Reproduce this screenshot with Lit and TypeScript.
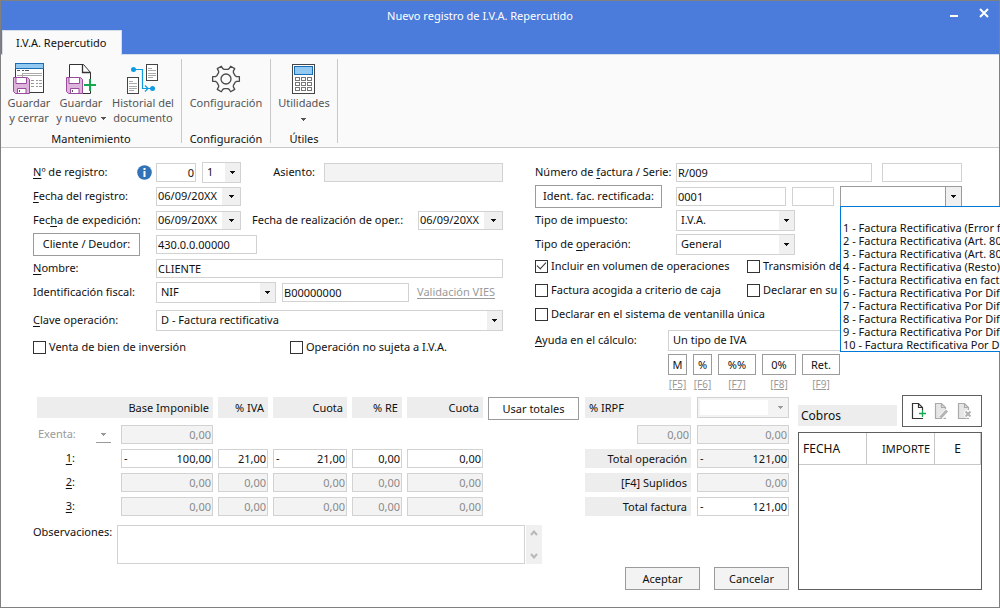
import { LitElement, html, css, svg, nothing } from "lit";
import { customElement } from "lit/decorators.js";

const REASONS = [
  "",
  "1 - Factura Rectificativa (Error fundado en derecho)",
  "2 - Factura Rectificativa (Art. 80.3)",
  "3 - Factura Rectificativa (Art. 80.4)",
  "4 - Factura Rectificativa (Resto)",
  "5 - Factura Rectificativa en facturas simplificadas",
  "6 - Factura Rectificativa Por Diferencias",
  "7 - Factura Rectificativa Por Diferencias",
  "8 - Factura Rectificativa Por Diferencias",
  "9 - Factura Rectificativa Por Diferencias",
  "10 - Factura Rectificativa Por Diferencias",
];

const KEYS = [
  { text: "M", key: "[F5]", cls: "k1" },
  { text: "%", key: "[F6]", cls: "k1" },
  { text: "%%", key: "[F7]", cls: "k2" },
  { text: "0%", key: "[F8]", cls: "k3" },
  { text: "Ret.", key: "[F9]", cls: "k2" },
];

const LINES = [
  { n: "1", off: false, values: ["100,00", "21,00", "21,00", "0,00", "0,00"], minus: [0, 2] },
  { n: "2", off: true, values: ["0,00", "0,00", "0,00", "0,00", "0,00"], minus: [] as number[] },
  { n: "3", off: true, values: ["0,00", "0,00", "0,00", "0,00", "0,00"], minus: [] as number[] },
];
const LINE_FIELDS = ["Base Imponible", "% IVA", "Cuota", "% RE", "Cuota RE"];

const arrow = html`<svg class="arrow" width="5" height="3" viewBox="0 0 5 3" aria-hidden="true"><path d="M0 0h5v1h-1v1h-1v1h-1v-1h-1v-1h-1z" fill="currentColor" shape-rendering="crispEdges"/></svg>`;

const floppy = svg`
  <path d="M.5 15.5h14l2 2v14H2.5l-2-2z" fill="#dcb4dc" stroke="#9a4a9f"/>
  <path d="M3 15.5h10.500v6H3z" fill="#fff" stroke="#9a4a9f"/>
  <path d="M4.500 31.500v-5h8.500v5z" fill="#fff" stroke="#9a4a9f"/>
  <path d="M6 28h1v2H6z" fill="#555"/>`;

const saveCloseIcon = html`<svg width="32" height="32" viewBox="0 0 32 32" aria-hidden="true">
  <g shape-rendering="crispEdges" fill="none">
    <path d="M2.500 6v24.500h28V6" fill="#fff" stroke="#3a3a3a"/>
    <path d="M2.500 1.500h28v5h-28z" fill="#92c9f0" stroke="#1a6cb4"/>
    <path d="M4 13.500h25M9.500 11v4M9 11.500h20" stroke="#aaa"/>
    <path d="M4 8.500h3m2 0h2m1 0h4" stroke="#555"/>
    <path d="M18 18.500h3m2 0h2m1 0h3M18 21.500h3m2 0h2m1 0h3M18 24.500h3m2 0h2m1 0h3" stroke="#999"/>
  </g>${floppy}</svg>`;

const saveNewIcon = html`<svg width="32" height="32" viewBox="0 0 32 32" aria-hidden="true">
  <path d="M4.500 31V2.500h14l7 8V31.500h-8" fill="#fff" stroke="#333"/>
  <path d="M17.500 2.500v8h8" fill="none" stroke="#333" stroke-width="1.300"/>
  <path d="M25 17v12M19 23h12" stroke="#fafafa" stroke-width="5"/>
  <path d="M25 17v12M19 23h12" stroke="#17a650" stroke-width="2"/>
  <g transform="translate(1 0)">${floppy}</g></svg>`;

const historyIcon = html`<svg width="32" height="32" viewBox="0 0 32 32" aria-hidden="true">
  <g fill="#fff" stroke="#444" shape-rendering="crispEdges">
    <path d="M19.500 2.500h11v16h-11zM.5 15.500h11v16h-11z"/>
    <path d="M21 6.500h4M21 8.500h8M21 11.500h8M21 13.500h8M21 15.500h5M2 19.500h4M2 21.500h8M2 24.500h8M2 26.500h8M2 28.500h5" stroke="#aaa"/>
  </g>
  <path d="M7 7.500h8.500v19H25M18 23.500l3 3-3 3" fill="none" stroke="#0f9be3" stroke-width="1.200"/>
  <circle cx="6.500" cy="7.500" r="2.500" fill="#0f9be3"/><circle cx="25.500" cy="26.500" r="2.500" fill="#0f9be3"/></svg>`;

const gearOutline = (cx: number, cy: number) => {
  const at = (deg: number, r: number) => {
    const a = (deg * Math.PI) / 180;
    return `${(cx + r * Math.cos(a)).toFixed(2)} ${(cy + r * Math.sin(a)).toFixed(2)}`;
  };
  const teeth = [0, 60, 120, 180, 240, 300].map(
    (t) => `${at(t - 19, 9.8)} L${at(t - 13, 10.8)} L${at(t - 10, 13.6)} L${at(t + 10, 13.6)} L${at(t + 13, 10.8)} L${at(t + 19, 9.8)}`,
  );
  return `M${teeth.join(" L")}Z`;
};

const gearIcon = html`<svg width="32" height="32" viewBox="0 0 32 32" aria-hidden="true">
  <g fill="none" stroke="#4a4a4a" stroke-width="1.300" stroke-linejoin="round">
    <path d=${gearOutline(16, 17)} /><circle cx="16" cy="17" r="5"/>
  </g></svg>`;

const calcIcon = html`<svg width="32" height="32" viewBox="0 0 32 32" aria-hidden="true">
  <g shape-rendering="crispEdges" fill="#fff" stroke="#444">
    <path d="M4.500 2.500h22v29h-22z"/>
    <path d="M6.500 4.500h18v8h-18z" fill="#92c9f0" stroke="#1a6cb4"/>
    ${[15, 20, 25].map((y) => [7, 13, 19].map((x) => svg`<rect x=${x + 0.5} y=${y + 0.5} width="4" height="3" stroke="#777"/>`))}
  </g></svg>`;

const docIcon = (stroke: string, fill: string, extra: unknown) => html`<svg width="16" height="18" viewBox="0 0 16 18" aria-hidden="true">
  <path d="M11.500 5.500V16.500H1.500V1.500h6z" fill=${fill}/>
  <path d="M12 16.500H1.500V1.500h6l4 4V8M7.500 1.500v4h4" fill="none" stroke=${stroke} stroke-width="1.200"/>${extra}</svg>`;

const addIcon = docIcon("#333", "#fff", svg`<path d="M8 11.500h7M11.500 8v7" stroke="#fff" stroke-width="4"/><path d="M8 11.500h7M11.500 8v7" stroke="#17a650" stroke-width="1.300"/>`);
const editIcon = docIcon("#aaa", "#e6e6e6", svg`<path d="M7 15.500l6.500-7" stroke="#fff" stroke-width="5"/><path d="M6.500 15.500l6.500-7" stroke="#b4b4b4" stroke-width="3"/>`);
const removeIcon = docIcon("#aaa", "#e6e6e6", svg`<path d="M8 9l6 6M14 9l-6 6" stroke="#fff" stroke-width="4"/><path d="M8.500 9.500l5 5M13.500 9.500l-5 5" stroke="#b0b0b0" stroke-width="2"/>`);

@customElement("app-root")
export class AppRoot extends LitElement {
  static styles = css`
    :host { display: block; min-height: 100vh; overflow: hidden; box-sizing: border-box; position: relative;
      font: 11px/14px "Noto Sans", "Open Sans", sans-serif; color: #111; background: #fff; }
    *, *::before { box-sizing: border-box; }
    button, input, select, textarea { font: inherit; color: inherit; margin: 0; border-radius: 0; }
    u { text-underline-offset: 2px; }
    .window { border: 1px solid #808080; min-height: 100vh; display: flex; flex-direction: column; }

    .title { background: #4b7bdb; color: #fff; height: 29px; display: flex; align-items: center; padding: 0 0 0 20px; }
    .title h1 { flex: 1; margin: 0; font: inherit; text-align: center; }
    .title button { border: 0; background: none; color: #fff; width: 30px; height: 24px; padding: 0; display: grid; place-items: center; }
    .title .wins { display: flex; align-self: flex-start; }
    .tabs { background: #4b7bdb; border-bottom: 1px solid #d5dcea; height: 25px; display: flex; padding-left: 1px; }
    .tab { height: 25px; border: 1px solid #d5dcea; border-bottom: 0; background: #fafafa; padding: 0 14px 0 13px; }

    .ribbon { background: #fafafa; border-bottom: 1px solid #c8c8c8; height: 93px; display: flex; padding: 4px 0; }
    .group { border-right: 1px solid #c8c8c8; display: flex; flex-direction: column; justify-content: space-between; }
    .group h2 { margin: 0; font: inherit; text-align: center; line-height: 9px; }
    .tools { display: flex; justify-content: center; }
    .g1 .tools { justify-content: flex-start; padding-left: 1px; }
    .tool { border: 0; background: none; padding: 3px 0 0; color: #555; line-height: 15px; display: flex; flex-direction: column; align-items: center; gap: 1px; white-space: nowrap; }
    .tool .arrow { margin: 0 0 2px 4px; }
    .tool .arrow.arrow:only-child { margin-left: 0; }
    .tool svg { flex: none; }
    .g1 { width: 181px; }
    .g1 .tool:nth-child(1) { width: 54px; }
    .g1 .tool:nth-child(2) { width: 50px; }
    .g1 .tool:nth-child(3) { width: 74px; }
    .g2 { width: 89px; }
    .g3 { width: 67px; }

    .form { display: grid; grid-template-columns: 470fr 427fr; column-gap: 32px; padding: 12px 37px 0 32px; }
    .row { display: flex; align-items: center; height: 24px; }
    .row.tall { height: 32px; }
    .left .cap { width: 123px; flex: none; }
    .right .cap { width: 141px; flex: none; }
    .btn { border: 1px solid #9b9b9b; background: #fff; padding: 0; height: 23px; text-align: center; }
    .btn.soft { background: #f3f3f3; }
    .capwrap { display: flex; align-items: center; justify-content: space-between; padding-right: 4px; }
    .w-deudor { width: 107px; }
    .w-ident { width: 127px; }

    .field { border: 1px solid #d2d2d2; background: #fff; height: 19px; padding: 0 1px; min-width: 0; width: 100%; display: block; }
    .field:disabled { background: #f3f3f3; color: #8a8a8a; }
    .num { text-align: right; }
    .combo { position: relative; display: flex; border: 1px solid #d2d2d2; height: 21px; background: #fff; flex: none; }
    .combo select { appearance: none; border: 0; background: none; flex: 1; min-width: 0; padding: 0 18px 0 4px; outline: 0; }
    .combo .drop { position: absolute; right: 0; top: 0; bottom: 0; width: 15px; background: #f0f0f0; display: grid; place-items: center; pointer-events: none; }
    .date { display: flex; border: 1px solid #d2d2d2; height: 19px; width: 85px; flex: none; background: #fff; }
    .date input { border: 0; padding: 0 1px; flex: 1; min-width: 0; background: none; outline: 0; }
    .date button { border: 0; padding: 0; width: 18px; background: #f0f0f0; display: grid; place-items: center; }
    .open { border-color: #9b9b9b; }
    .open .drop { border-left: 1px solid #9b9b9b; width: 16px; }
    .list { position: absolute; z-index: 5; top: 100%; left: -1px; width: 300px; margin: 0; padding: 1px 2px 0; list-style: none; background: #fff; border: 1px solid #0078d7; line-height: 13px; white-space: nowrap; }
    .list li { height: 13px; }

    .combo.grow, .grow { flex: 1; min-width: 0; }
    .field.w39 { width: 40px; flex: none; }
    .w38 { width: 39px; }
    .w42 { width: 42px; flex: none; }
    .w80 { width: 80px; flex: none; }
    .w101 { width: 101px; }
    .w119 { width: 119px; }
    .w120 { width: 120px; }
    .w122 { width: 122px; }
    .w127 { width: 127px; flex: none; }
    .w179 { width: 179px; flex: none; }
    .gap6 { gap: 6px; }
    .gap10 { gap: 10px; }
    .push { margin-left: auto; }
    .sub { margin-left: auto; padding-right: 9px; flex: none; }
    .sub2 { padding-left: 11px; flex: none; }
    .link { color: #9a9a9a; text-decoration: underline; text-underline-offset: 2px; padding-left: 8px; white-space: nowrap; }

    .check { display: flex; align-items: center; gap: 3px; height: 20px; white-space: nowrap; }
    .check input { appearance: none; width: 13px; height: 13px; border: 1px solid #333; background: #fff; display: grid; place-items: center; flex: none; }
    .check input:checked::before { content: ""; width: 9px; height: 5px; border: solid #333; border-width: 0 0 1px 1px; transform: rotate(-47deg); margin-bottom: 3px; }
    .checks { display: grid; grid-template-columns: 212px 1fr; grid-auto-rows: 24px; }
    .checks .wide { grid-column: 1 / -1; }
    .pair { display: grid; grid-template-columns: 257px 1fr; height: 22px; align-items: center; }
    .calc { display: flex; align-items: center; height: 24px; }
    .calc .cap2 { width: 133px; flex: none; }
    .keys { display: flex; gap: 6px; padding: 2px 0 0 133px; }
    .key { text-align: center; }
    .key .btn { display: block; width: 100%; height: 21px; }
    .key a { color: #9a9a9a; line-height: 18px; font-size: 10px; }
    .k1 { width: 19px; } .k2 { width: 38px; } .k3 { width: 34px; }

    .lower { display: grid; grid-template-columns: 1fr 184px; column-gap: 9px; padding: 2px 17px 0 32px; }
    .entry { padding-top: 2px; min-width: 0; }
    .amounts { display: flex; gap: 6px; }
    .lines { flex: 1; min-width: 0; display: grid; grid-template-columns: 83px 92fr 50fr 74fr 50fr 76fr 91px; column-gap: 5px; grid-template-rows: 25px repeat(4, 24px); align-items: center; }
    .head { background: #ededed; height: 21px; line-height: 21px; padding: 0 4px; text-align: right; align-self: start; white-space: nowrap; }
    .head.first { grid-column: 1 / 3; margin-left: 4px; }
    .lines .btn { align-self: start; }
    .rowcap { text-align: right; padding-right: 41px; }
    .rowcap.ex { display: flex; justify-content: space-between; padding: 0 5px; color: #9a9a9a; align-items: center; }
    .mini { border: 0; border-bottom: 1px solid #9a9a9a; background: none; width: 15px; height: 18px; padding: 2px 0 0; color: #9a9a9a; }
    .mini svg { display: block; margin: 0 auto; }
    .col1 { grid-column: 1; }
    .signed { display: flex; align-items: center; border: 1px solid #d2d2d2; height: 19px; background: #fff; padding-left: 2px; }
    .signed input { border: 0; background: none; flex: 1; width: 0; min-width: 0; height: 17px; padding: 0 1px; text-align: right; outline: 0; }
    .signed.ro { background: #f3f3f3; }
    .totals { width: 204px; display: grid; grid-template-columns: 106px 92px; column-gap: 6px; grid-template-rows: 25px repeat(4, 24px); align-items: center; }
    .totals .combo { align-self: start; background: #f3f3f3; color: #9a9a9a; padding: 2px; }
    .totals .combo select { background: #fff; margin-right: 18px; padding: 0; width: 0; }
    .totals .combo .drop { background: none; }
    .lab { background: #ededed; height: 19px; line-height: 19px; text-align: right; padding-right: 4px; }
    .irpf { text-align: left; }
    .half { width: 54px; justify-self: end; }

    .obs { display: flex; margin-top: 7px; padding-right: 247px; }
    .obs label { width: 84px; flex: none; }
    .obs textarea { flex: 1; min-width: 0; height: 39px; border: 1px solid #d2d2d2; resize: none; display: block; overflow: hidden; }
    .scroll { width: 16px; margin-left: 1px; background: #f0f0f0; display: flex; flex-direction: column; justify-content: space-between; }
    .scroll button { border: 0; background: none; padding: 0; height: 16px; display: grid; place-items: center; }
    .actions { display: flex; justify-content: flex-end; gap: 14px; margin-top: 3px; }
    .actions .btn { width: 75px; }

    .cobros { display: flex; flex-direction: column; gap: 5px; }
    .cobtop { display: flex; gap: 5px; align-items: flex-end; }
    .cobtop h2 { margin: 0 0 1px; flex: 1; font-size: 12px; font-weight: normal; background: #ededed; height: 21px; line-height: 21px; padding-left: 3px; }
    .bar { border: 1px solid #5f5f5f; width: 80px; height: 32px; display: flex; align-items: center; justify-content: center; gap: 7px; }
    .bar button { border: 0; background: none; padding: 0; height: 18px; width: 16px; }
    .tablebox { flex: 1; border: 1px solid #5f5f5f; }
    table { width: 100%; border-collapse: separate; border-spacing: 0; table-layout: fixed; }
    th { height: 32px; font-size: 12px; font-weight: normal; border-right: 1px solid #c8c8c8; border-bottom: 1px solid #c8c8c8; padding: 0 4px; text-align: left; }
    th.imp { text-align: right; font-size: 11px; }
    th.e { text-align: center; }
    .cf { width: 68px; }
  `;

  private combo(id: string, value: string, cls: string, label = "") {
    return html`<span class="combo ${cls}"><select id=${id} aria-label=${label || nothing}><option>${value}</option></select><span class="drop">${arrow}</span></span>`;
  }

  private date(id: string) {
    return html`<span class="date"><input id=${id} value="06/09/20XX"><button type="button" aria-label="Abrir calendario">${arrow}</button></span>`;
  }

  private amount(value: string, label: string, off: boolean, minus: boolean, ro = false) {
    return minus
      ? html`<span class="signed ${ro ? "ro" : ""}">-<input aria-label=${label} value=${value} ?readonly=${ro}></span>`
      : html`<input class="field num" aria-label=${label} value=${value} ?disabled=${off}>`;
  }

  private check(text: string, cls = "", on = false) {
    return html`<label class="check ${cls}"><input type="checkbox" ?checked=${on}>${text}</label>`;
  }

  private ribbon() {
    return html`<div class="ribbon">
      <section class="group g1"><div class="tools">
        <button class="tool">${saveCloseIcon}<span>Guardar<br>y cerrar</span></button>
        <button class="tool">${saveNewIcon}<span>Guardar<br>y nuevo${arrow}</span></button>
        <button class="tool">${historyIcon}<span>Historial del<br>documento</span></button>
      </div><h2>Mantenimiento</h2></section>
      <section class="group g2"><div class="tools"><button class="tool">${gearIcon}<span>Configuración</span></button></div><h2>Configuración</h2></section>
      <section class="group g3"><div class="tools"><button class="tool">${calcIcon}<span>Utilidades</span><span>${arrow}</span></button></div><h2>Útiles</h2></section>
    </div>`;
  }

  private leftForm() {
    return html`<div class="left">
      <div class="row">
        <span class="cap capwrap"><label for="nreg"><u>N</u>º de registro:</label>
          <svg width="15" height="15" viewBox="0 0 15 15" aria-hidden="true"><circle cx="7.500" cy="7.500" r="7.300" fill="#3273b8"/><path d="M6.500 3h2v2h-2zM6.500 6h2v6h-2z" fill="#fff"/></svg></span>
        <span class="row gap6 grow">
          <input id="nreg" class="field num w39" value="0">
          ${this.combo("serieReg", "1", "w38", "Serie del registro")}
          <label class="sub" for="asiento">Asiento:</label>
        </span>
        <input id="asiento" class="field w179" disabled>
      </div>
      <div class="row"><label class="cap" for="freg"><u>F</u>echa del registro:</label>${this.date("freg")}</div>
      <div class="row"><label class="cap" for="fexp">Fec<u>h</u>a de expedición:</label>${this.date("fexp")}
        <label class="sub2" for="foper">Fecha de realización de oper.:</label><span class="push">${this.date("foper")}</span></div>
      <div class="row"><span class="cap"><button type="button" class="btn w-deudor">Cliente / Deudor:</button></span><input class="field w101" aria-label="Cliente / Deudor" value="430.0.0.00000"></div>
      <div class="row"><label class="cap" for="nombre"><u>N</u>ombre:</label><input id="nombre" class="field grow" value="CLIENTE"></div>
      <div class="row"><label class="cap" for="idf">Identificación fiscal:</label><span class="row gap6">${this.combo("idf", "NIF", "w120")}<input class="field w127" aria-label="Número de identificación" value="B00000000"></span>
        <a class="link" href="#vies">Validación VIES</a></div>
      <div class="row tall"><label class="cap" for="clave"><u>C</u>lave operación:</label>${this.combo("clave", "D - Factura rectificativa", "grow")}</div>
      <div class="pair">${this.check("Venta de bien de inversión")}${this.check("Operación no sujeta a I.V.A.")}</div>
    </div>`;
  }

  private rightForm() {
    return html`<div class="right">
      <div class="row"><label class="cap" for="nfac">Número de <u>f</u>actura / Serie:</label>
        <span class="row gap10 grow"><input id="nfac" class="field grow" value="R/009"><input class="field w80" aria-label="Serie"></span></div>
      <div class="row"><span class="cap"><button type="button" class="btn w-ident">Ident. fac. rectificada:</button></span>
        <span class="row gap6 grow"><input class="field grow" aria-label="Factura rectificada" value="0001"><input class="field w42" aria-label="Serie rectificada">
        <span class="combo open w122"><select aria-label="Tipo de rectificativa"><option></option></select><span class="drop">${arrow}</span>
          <ul class="list" role="listbox" aria-label="Tipo de rectificativa">${REASONS.map((r) => html`<li role="option">${r}</li>`)}</ul></span></span></div>
      <div class="row"><label class="cap" for="timp">Tipo de impuesto:</label>${this.combo("timp", "I.V.A.", "w119")}</div>
      <div class="row"><label class="cap" for="tope">Tipo de <u>o</u>peración:</label>${this.combo("tope", "General", "w119")}</div>
      <div class="checks">
        ${this.check("Incluir en volumen de operaciones", "", true)}${this.check("Transmisión de")}
        ${this.check("Factura acogida a criterio de caja")}${this.check("Declarar en su")}
        ${this.check("Declarar en el sistema de ventanilla única", "wide")}
      </div>
      <div class="calc"><label class="cap2" for="ayuda"><u>A</u>yuda en el cálculo:</label>${this.combo("ayuda", "Un tipo de IVA", "grow")}</div>
      <div class="keys">${KEYS.map((k) => html`<div class="key ${k.cls}"><button type="button" class="btn">${k.text}</button><a href="#">${k.key}</a></div>`)}</div>
    </div>`;
  }

  private lower() {
    return html`<div class="lower">
      <div class="entry">
        <div class="amounts">
          <div class="lines">
            <span class="head first">Base Imponible</span><span class="head">% IVA</span><span class="head">Cuota</span><span class="head">% RE</span><span class="head">Cuota</span>
            <button class="btn">Usar totales</button>
            <span class="rowcap ex">Exenta:<button class="mini" aria-label="Tipo de exención">${arrow}</button></span>
            ${this.amount("0,00", "Base exenta", true, false)}
            ${LINES.map((l) => html`<span class="rowcap col1"><u>${l.n}</u>:</span>${l.values.map((v, i) => this.amount(v, `${LINE_FIELDS[i]} ${l.n}`, l.off, l.minus.includes(i)))}`)}
          </div>
          <div class="totals">
            <span class="head irpf">% IRPF</span>${this.combo("irpf", "", "", "Tipo de IRPF")}
            <input class="field num half" aria-label="% IRPF" value="0,00" disabled><input class="field num" aria-label="Importe IRPF" value="0,00" disabled>
            <span class="lab">Total operación</span>${this.amount("121,00", "Total operación", false, true, true)}
            <span class="lab">[F4] Suplidos</span>${this.amount("0,00", "Suplidos", true, false)}
            <span class="lab">Total factura</span>${this.amount("121,00", "Total factura", false, true)}
          </div>
        </div>
        <div class="obs"><label for="obs">Observaciones:</label><textarea id="obs"></textarea>
          <div class="scroll">
            <button aria-label="Subir"><svg width="8" height="6" viewBox="0 0 8 6"><path d="M1 5l3-3.500 3 3.500" fill="none" stroke="#b8b8b8" stroke-width="2"/></svg></button>
            <button aria-label="Bajar"><svg width="8" height="6" viewBox="0 0 8 6"><path d="M1 1l3 3.500 3-3.500" fill="none" stroke="#b8b8b8" stroke-width="2"/></svg></button>
          </div></div>
        <div class="actions"><button class="btn soft">Aceptar</button><button class="btn soft">Cancelar</button></div>
      </div>
      <section class="cobros">
        <div class="cobtop"><h2>Cobros</h2><div class="bar">
          <button aria-label="Nuevo cobro">${addIcon}</button><button aria-label="Modificar cobro" disabled>${editIcon}</button><button aria-label="Eliminar cobro" disabled>${removeIcon}</button></div></div>
        <div class="tablebox"><table><thead><tr><th class="cf">FECHA</th><th class="imp cf">IMPORTE</th><th class="e">E</th></tr></thead><tbody></tbody></table></div>
      </section>
    </div>`;
  }

  render() {
    return html`<div class="window">
      <header class="title"><h1>Nuevo registro de I.V.A. Repercutido</h1><div class="wins">
        <button aria-label="Minimizar"><svg width="10" height="10"><path d="M1 7h8v2H1z" fill="#fff"/></svg></button>
        <button aria-label="Cerrar"><svg width="10" height="10"><path d="M1 1l8 8M9 1l-8 8" stroke="#fff" stroke-width="2"/></svg></button></div></header>
      <nav class="tabs"><button class="tab">I.V.A. Repercutido</button></nav>
      ${this.ribbon()}
      <main><form class="form" @submit=${(e: Event) => e.preventDefault()}>${this.leftForm()}${this.rightForm()}</form>${this.lower()}</main>
    </div>`;
  }
}
